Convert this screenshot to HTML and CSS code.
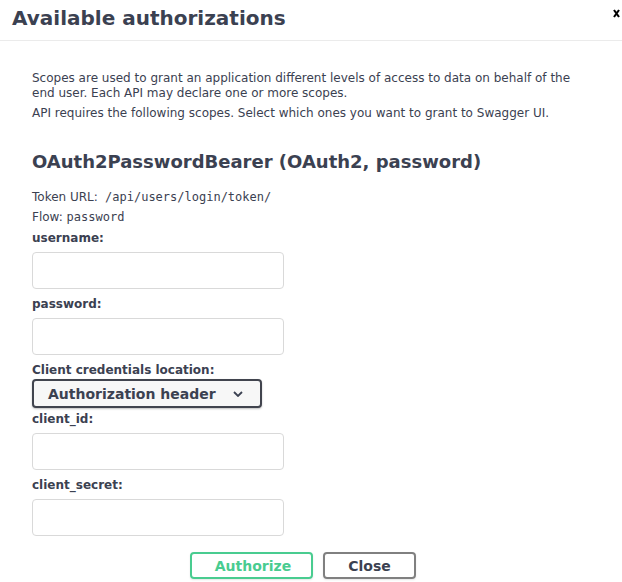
FILE: index.html
```html
<!DOCTYPE html>
<html lang="en">
<head>
<meta charset="utf-8">
<title>Available authorizations</title>
<link rel="stylesheet" href="styles.css">
</head>
<body>
<div class="modal">
  <div class="modal-header">
    <h3 class="modal-title">Available authorizations</h3>
    <button class="close-x" type="button" aria-label="Close">
      <svg width="7" height="9" viewBox="0 0 7 9"><path d="M1 1 L6 8 M6 1 L1 8" stroke="#000" stroke-width="2.1" fill="none"/></svg>
    </button>
  </div>
  <div class="modal-content">
    <p class="desc first">Scopes are used to grant an application different levels of access to data on behalf of the end user. Each API may declare one or more scopes.</p>
    <p class="desc">API requires the following scopes. Select which ones you want to grant to Swagger UI.</p>
    <h4 class="scheme-title">OAuth2PasswordBearer (OAuth2, password)</h4>
    <p class="meta">Token URL:<code> /api/users/login/token/</code></p>
    <p class="meta">Flow: <code>password</code></p>

    <label class="field-label first-label">username:</label>
    <div class="text-input"></div>

    <label class="field-label">password:</label>
    <div class="text-input"></div>

    <label class="field-label select-label">Client credentials location:</label>
    <div class="select">
      <span>Authorization header</span>
      <svg class="chevron" width="10" height="6" viewBox="0 0 10 6"><path d="M1 1 L5 5 L9 1" stroke="#3b4151" stroke-width="1.8" fill="none"/></svg>
    </div>

    <label class="field-label after-select">client_id:</label>
    <div class="text-input"></div>

    <label class="field-label">client_secret:</label>
    <div class="text-input"></div>

    <div class="btn-wrapper">
      <button class="btn authorize" type="button">Authorize</button>
      <button class="btn done" type="button">Close</button>
    </div>
  </div>
  <div class="bottom-rule"></div>
</div>
</body>
</html>
```

FILE: styles.css
```css
* { box-sizing: border-box; }

html, body {
  margin: 0;
  padding: 0;
  background: #fff;
}

body {
  font-family: "DejaVu Sans", sans-serif;
  color: #3b4151;
  overflow: hidden;
}

.modal {
  width: 622px;
}

.modal-header {
  display: flex;
  align-items: flex-start;
  justify-content: space-between;
  padding: 7px 2px 9px 12px;
  border-bottom: 1px solid #ebebeb;
  height: 41px;
}

.modal-title {
  margin: 0;
  font-size: 20px;
  line-height: 23px;
  font-weight: 700;
  color: #3b4151;
}

.close-x {
  border: 0;
  background: none;
  padding: 0;
  margin-top: 2px;
  width: 7px;
  height: 9px;
  display: flex;
}

.modal-content {
  padding: 30px 32px 0 32px;
}

.desc {
  margin: 0;
  font-size: 12px;
  line-height: 15px;
}

.desc.first {
  margin-bottom: 5px;
}

.scheme-title {
  margin: 29px 0 13px;
  font-size: 18px;
  line-height: 24px;
  font-weight: 700;
}

.meta {
  margin: 0;
  font-size: 12px;
  line-height: 20px;
}

.meta code {
  font-family: "DejaVu Sans Mono", monospace;
  font-size: 12px;
  white-space: pre;
}

.field-label {
  display: block;
  font-size: 12px;
  line-height: 16px;
  font-weight: 700;
  margin-top: 7px;
  margin-bottom: 6px;
}

.field-label.first-label {
  margin-top: 3px;
}

.field-label.select-label {
  margin-bottom: 1px;
}

.field-label.after-select {
  margin-top: 3px;
}

.text-input {
  width: 252px;
  height: 37px;
  border: 1px solid #d9d9d9;
  border-radius: 4px;
  background: #fff;
}

.select {
  display: flex;
  align-items: center;
  justify-content: space-between;
  width: 230px;
  height: 29px;
  padding: 0 17px 0 14px;
  border: 2px solid #41444e;
  border-radius: 4px;
  background: #f7f7f7;
  box-shadow: 0 1px 2px rgba(0, 0, 0, 0.25);
  font-size: 14px;
  font-weight: 700;
  color: #3b4151;
}

.chevron {
  display: block;
}

.btn-wrapper {
  display: flex;
  justify-content: center;
  gap: 10px;
  padding-top: 16px;
}

.btn {
  font-family: "DejaVu Sans", sans-serif;
  font-size: 14px;
  font-weight: 700;
  height: 27px;
  padding: 0;
  border: 2px solid #888;
  border-radius: 4px;
  background: transparent;
  box-shadow: 0 1px 2px rgba(0, 0, 0, 0.1);
  color: #3b4151;
}

.btn.authorize {
  width: 123px;
  padding-left: 3px;
  border-color: #49cc90;
  color: #49cc90;
}

.btn.done {
  width: 93px;
  margin-right: 16px;
  border-color: #808080;
}

.bottom-rule {
  margin-top: 3px;
  border-top: 1px solid #e8e8e8;
}
```
